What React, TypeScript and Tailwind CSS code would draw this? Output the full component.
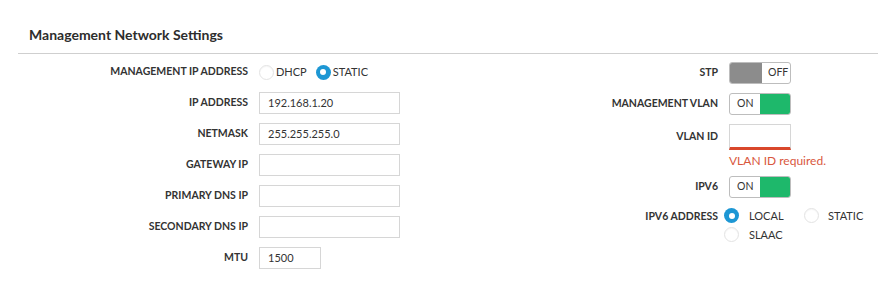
import React from "react";

const font = { fontFamily: "Lato, 'Open Sans', sans-serif" };

function Radio({ checked }: { checked?: boolean }) {
  return checked ? (
    <span className="flex h-[15px] w-[15px] shrink-0 items-center justify-center rounded-full bg-[#1d97d4]">
      <span className="h-[6px] w-[6px] rounded-full bg-white" />
    </span>
  ) : (
    <span className="h-[15px] w-[15px] shrink-0 rounded-full border border-[#e3e3e3] bg-white shadow-[inset_0_1px_1px_rgba(0,0,0,0.04)]" />
  );
}

function Input({ value, w = "w-[141px]" }: { value?: string; w?: string }) {
  return (
    <div className={`flex h-[22px] ${w} items-center border border-[#d6d6d6] bg-white pl-[8px] text-[11px] text-[#333]`}>
      {value}
    </div>
  );
}

function Toggle({ on }: { on: boolean }) {
  return on ? (
    <div className="flex h-[22px] w-[62px] overflow-hidden rounded-[3px] border border-[#bdbdbd] bg-white">
      <div className="flex w-[30px] items-center pl-[7px] text-[10.5px] text-[#333]">ON</div>
      <div className="flex-1 bg-[#1eb86b]" />
    </div>
  ) : (
    <div className="flex h-[22px] w-[62px] overflow-hidden rounded-[3px] border border-[#bdbdbd] bg-white">
      <div className="w-[32px] bg-[#8c8c8c]" />
      <div className="flex flex-1 items-center pl-[6px] text-[10.5px] text-[#333]">OFF</div>
    </div>
  );
}

function LRow({ label, children }: { label: string; children: React.ReactNode }) {
  return (
    <div className="flex h-[22px] items-center">
      <div className="w-[248px] text-right text-[10.5px] font-bold text-[#333]">{label}</div>
      <div className="ml-[11px] flex items-center">{children}</div>
    </div>
  );
}

function RRow({ label, children }: { label: string; children: React.ReactNode }) {
  return (
    <div className="flex h-[22px] items-center">
      <div className="w-[278px] text-right text-[10.5px] font-bold text-[#333]">{label}</div>
      <div className="ml-[11px] flex items-center">{children}</div>
    </div>
  );
}

export default function App() {
  return (
    <div className="h-[293px] w-[878px] bg-white" style={font}>
      <div className="ml-[18px] pt-[26px]">
        <div className="pb-[9px] pl-[11px] text-[14px] font-bold leading-[18px] text-[#2d2d2d]">
          Management Network Settings
        </div>
        <div className="h-px bg-[#cfcfcf]" />
      </div>
      <div className="flex pt-[7px]">
        <div className="flex w-[440px] flex-col gap-[9px]">
          <LRow label="MANAGEMENT IP ADDRESS">
            <Radio />
            <span className="ml-[2px] text-[11px] text-[#333]">DHCP</span>
            <span className="ml-[9px]">
              <Radio checked />
            </span>
            <span className="ml-[2px] text-[11px] text-[#333]">STATIC</span>
          </LRow>
          <LRow label="IP ADDRESS">
            <Input value="192.168.1.20" />
          </LRow>
          <LRow label="NETMASK">
            <Input value="255.255.255.0" />
          </LRow>
          <LRow label="GATEWAY IP">
            <Input />
          </LRow>
          <LRow label="PRIMARY DNS IP">
            <Input />
          </LRow>
          <LRow label="SECONDARY DNS IP">
            <Input />
          </LRow>
          <LRow label="MTU">
            <Input value="1500" w="w-[62px]" />
          </LRow>
        </div>
        <div className="flex flex-col pt-[1px]">
          <RRow label="STP">
            <Toggle on={false} />
          </RRow>
          <div className="mt-[9px]">
            <RRow label="MANAGEMENT VLAN">
              <Toggle on />
            </RRow>
          </div>
          <div className="mt-[9px] flex items-center">
            <div className="w-[278px] text-right text-[10.5px] font-bold text-[#333]">VLAN ID</div>
            <div className="ml-[11px] h-[26px] w-[62px] border border-b-[3px] border-[#d6d6d6] border-b-[#d9472b] bg-white" />
          </div>
          <div className="ml-[289px] mt-[2px] text-[12px] leading-[17px] text-[#d9573d]">VLAN ID required.</div>
          <div className="mt-[7px]">
            <RRow label="IPV6">
              <Toggle on />
            </RRow>
          </div>
          <div className="mt-[10px] flex">
            <div className="flex h-[15px] w-[278px] items-center justify-end pt-[2px] text-[10.5px] font-bold text-[#333]">
              IPV6 ADDRESS
            </div>
            <div className="ml-[6px] flex flex-col gap-[4px]">
              <div className="flex items-center">
                <Radio checked />
                <span className="ml-[10px] w-[55px] text-[11px] leading-[15px] text-[#333]">LOCAL</span>
                <Radio />
                <span className="ml-[9px] text-[11px] leading-[15px] text-[#333]">STATIC</span>
              </div>
              <div className="flex items-center">
                <Radio />
                <span className="ml-[10px] text-[11px] leading-[15px] text-[#333]">SLAAC</span>
              </div>
            </div>
          </div>
        </div>
      </div>
    </div>
  );
}
